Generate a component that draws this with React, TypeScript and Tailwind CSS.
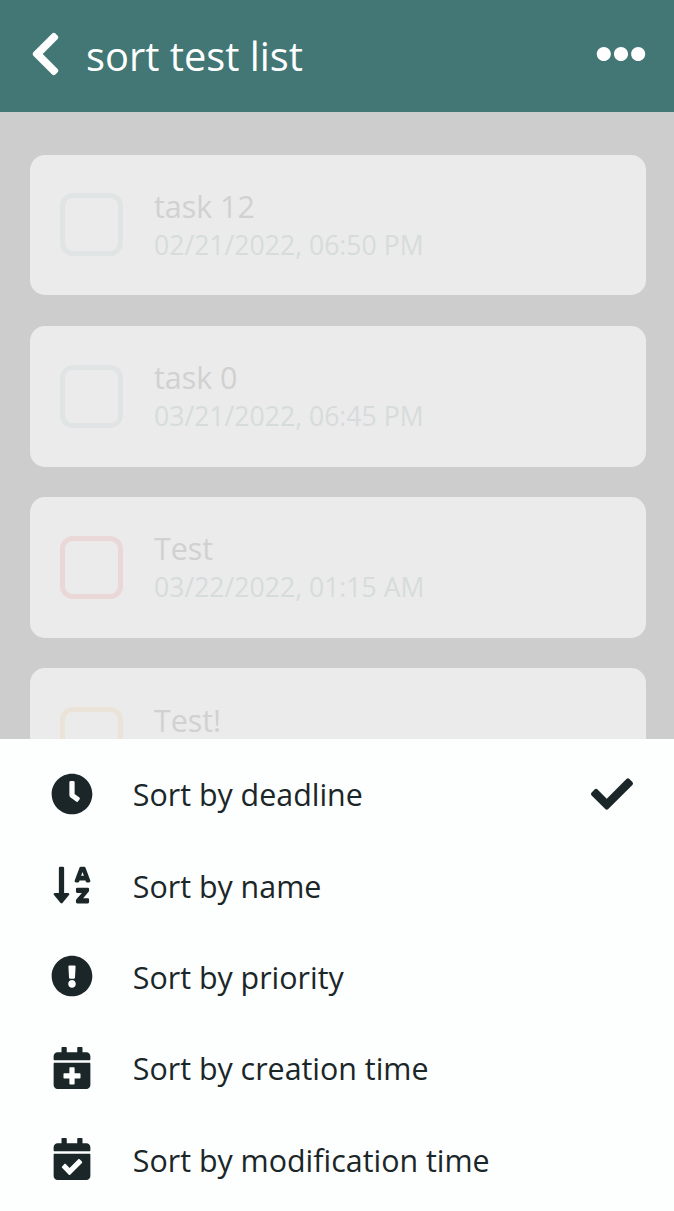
import {
  FaCalendarCheck,
  FaCalendarPlus,
  FaCheck,
  FaChevronLeft,
  FaClock,
  FaEllipsisH,
  FaExclamationCircle,
  FaSortAlphaDown,
} from "react-icons/fa";

const tasks = [
  { title: "task 12", date: "02/21/2022, 06:50 PM", border: "border-[#e0e4e4]" },
  { title: "task 0", date: "03/21/2022, 06:45 PM", border: "border-[#e0e4e4]" },
  { title: "Test", date: "03/22/2022, 01:15 AM", border: "border-[#ead7d7]" },
  { title: "Test!", date: "", border: "border-[#ebe3d8]" },
];

const options = [
  { label: "Sort by deadline", Icon: FaClock, selected: true },
  { label: "Sort by name", Icon: FaSortAlphaDown, selected: false },
  { label: "Sort by priority", Icon: FaExclamationCircle, selected: false },
  { label: "Sort by creation time", Icon: FaCalendarPlus, selected: false },
  { label: "Sort by modification time", Icon: FaCalendarCheck, selected: false },
];

export default function App() {
  return (
    <div className="flex h-[1211px] w-[674px] flex-col overflow-hidden bg-[#cdcdcd] font-['Open_Sans','Noto_Sans',sans-serif] font-[370]">
      <header className="flex h-28 shrink-0 items-center bg-[#427776] pr-7 pl-[30px] text-white">
        <button aria-label="Back" className="mb-1">
          <FaChevronLeft className="h-[50px] w-[31px]" />
        </button>
        <h1 className="ml-[25px] flex-1 text-[39.8px] leading-[54px] font-[370]">sort test list</h1>
        <button aria-label="More" className="mb-[5px]">
          <FaEllipsisH className="size-[50px]" />
        </button>
      </header>

      <main className="flex h-[627px] shrink-0 flex-col gap-[30.6px] overflow-hidden pt-[42.6px] pr-[28.5px] pl-[30px]">
        {tasks.map((t) => (
          <div key={t.title} className="flex h-[140.7px] shrink-0 items-center rounded-[15px] bg-[#ebebeb] pl-[30.4px]">
            <div className={`size-[63px] rounded-[13px] border-[5.5px] ${t.border}`} />
            <div className="mt-[0.6px] ml-[30.6px]">
              <div className="text-[30.4px] leading-[40px] text-[#d1d1d1]">{t.title}</div>
              <div className="h-[37px] text-[26.6px] leading-[37px] text-[#d6dcdb]">{t.date}</div>
            </div>
          </div>
        ))}
      </main>

      <section className="flex flex-1 flex-col bg-[#fdfefe] pt-[9px] text-[#1b2628]">
        {options.map(({ label, Icon, selected }) => (
          <button key={label} className="flex h-[91.3px] shrink-0 items-center pr-[41.5px] pl-[50.8px] text-left">
            <Icon className="h-[42px] w-[42px]" />
            <span className="mt-[3.6px] ml-10 flex-1 text-[30.4px] leading-[42px]">{label}</span>
            {selected && <FaCheck className="size-[42px]" />}
          </button>
        ))}
      </section>
    </div>
  );
}
